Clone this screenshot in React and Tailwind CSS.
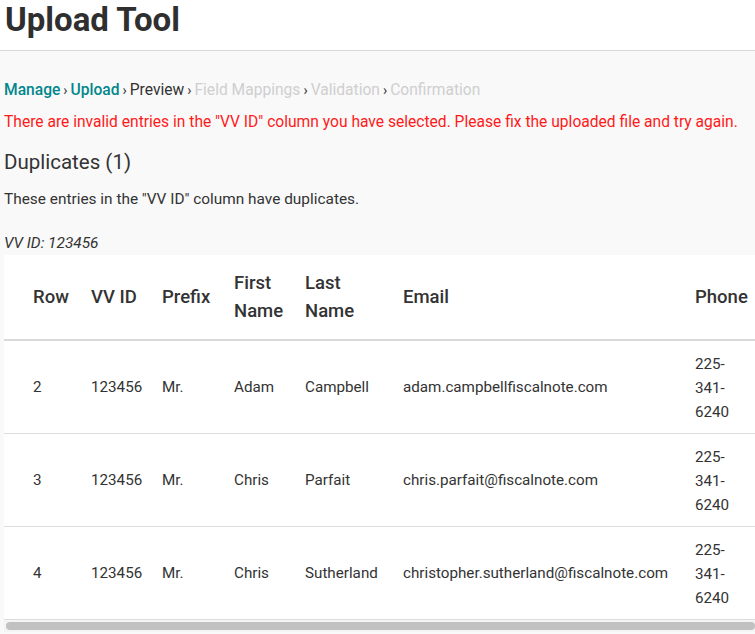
const rows = [
  { row: '2', id: '123456', prefix: 'Mr.', first: 'Adam', last: 'Campbell', email: 'adam.campbellfiscalnote.com', phone: '225-341-6240' },
  { row: '3', id: '123456', prefix: 'Mr.', first: 'Chris', last: 'Parfait', email: 'chris.parfait@fiscalnote.com', phone: '225-341-6240' },
  { row: '4', id: '123456', prefix: 'Mr.', first: 'Chris', last: 'Sutherland', email: 'christopher.sutherland@fiscalnote.com', phone: '225-341-6240' },
];

const steps = [
  { label: 'Manage', state: 'done' },
  { label: 'Upload', state: 'done' },
  { label: 'Preview', state: 'current' },
  { label: 'Field Mappings', state: 'todo' },
  { label: 'Validation', state: 'todo' },
  { label: 'Confirmation', state: 'todo' },
];

const stepColor = {
  done: 'text-[#00878c] font-medium',
  current: 'text-[#333333]',
  todo: 'text-[#cfcfcf]',
};

export default function App() {
  return (
    <div className="min-h-screen bg-[#f9f9f9] text-[#333333] font-['Roboto',sans-serif] overflow-hidden">
      <header className="h-[51px] bg-white border-b border-[#d9d9d9] px-[5px]">
        <h1 className="text-[33px] leading-[40px] font-bold text-[#2f2f2f]">Upload Tool</h1>
      </header>

      <div className="pl-[4px] pt-[27px]">
        <nav className="text-[15.6px] leading-[24px] flex items-center">
          {steps.map((s, i) => (
            <span key={s.label} className="flex items-center">
              {i > 0 ? <span className="text-[#333333] px-[3px] text-[14px]">›</span> : null}
              <span className={stepColor[s.state]}>{s.label}</span>
            </span>
          ))}
        </nav>

        <p className="mt-[8px] text-[15.6px] leading-[24px] text-[#ff1a1a]">
          There are invalid entries in the "VV ID" column you have selected. Please fix the uploaded file and try again.
        </p>

        <h2 className="mt-[14px] text-[20.5px] leading-[28px] text-[#333333]">Duplicates (1)</h2>

        <p className="mt-[12px] text-[15.4px] leading-[22px]">These entries in the "VV ID" column have duplicates.</p>

        <p className="mt-[22px] text-[15.4px] leading-[22px] italic">VV ID: 123456</p>

        <div className="mt-[1px] bg-white overflow-hidden">
          <table className="table-fixed border-collapse w-[780px] text-left">
            <colgroup>
              <col className="w-[87px]" />
              <col className="w-[71px]" />
              <col className="w-[72px]" />
              <col className="w-[71px]" />
              <col className="w-[98px]" />
              <col className="w-[292px]" />
              <col className="w-[89px]" />
            </colgroup>
            <thead>
              <tr className="border-b-2 border-[#d9d9d9] text-[18.5px] leading-[28px] text-[#333333]">
                <th className="pl-[29px] pr-[8px] py-[14px] font-medium">Row</th>
                <th className="pr-[8px] py-[14px] font-medium">VV ID</th>
                <th className="pr-[8px] py-[14px] font-medium">Prefix</th>
                <th className="pr-[8px] py-[14px] font-medium">First Name</th>
                <th className="pr-[20px] py-[14px] font-medium">Last Name</th>
                <th className="pr-[8px] py-[14px] font-medium">Email</th>
                <th className="pr-[20px] py-[14px] font-medium">Phone</th>
              </tr>
            </thead>
            <tbody>
              {rows.map((r) => (
                <tr key={r.row} className="border-b border-[#dddddd] text-[15.2px] leading-[24px] text-[#333333]">
                  <td className="pl-[29px] pr-[8px] py-[10px]">{r.row}</td>
                  <td className="pr-[8px] py-[10px]">{r.id}</td>
                  <td className="pr-[8px] py-[10px]">{r.prefix}</td>
                  <td className="pr-[8px] py-[10px]">{r.first}</td>
                  <td className="pr-[8px] py-[10px]">{r.last}</td>
                  <td className="pr-[8px] py-[10px]">{r.email}</td>
                  <td className="pr-[32px] pt-[11px] pb-[9px]">{r.phone}</td>
                </tr>
              ))}
            </tbody>
          </table>
        </div>

        <div className="h-[12px] bg-[#f4f4f4] flex items-center pl-[2px]">
          <div className="h-[8px] w-full rounded-full bg-[#c1c1c1]" />
        </div>
      </div>
    </div>
  );
}
